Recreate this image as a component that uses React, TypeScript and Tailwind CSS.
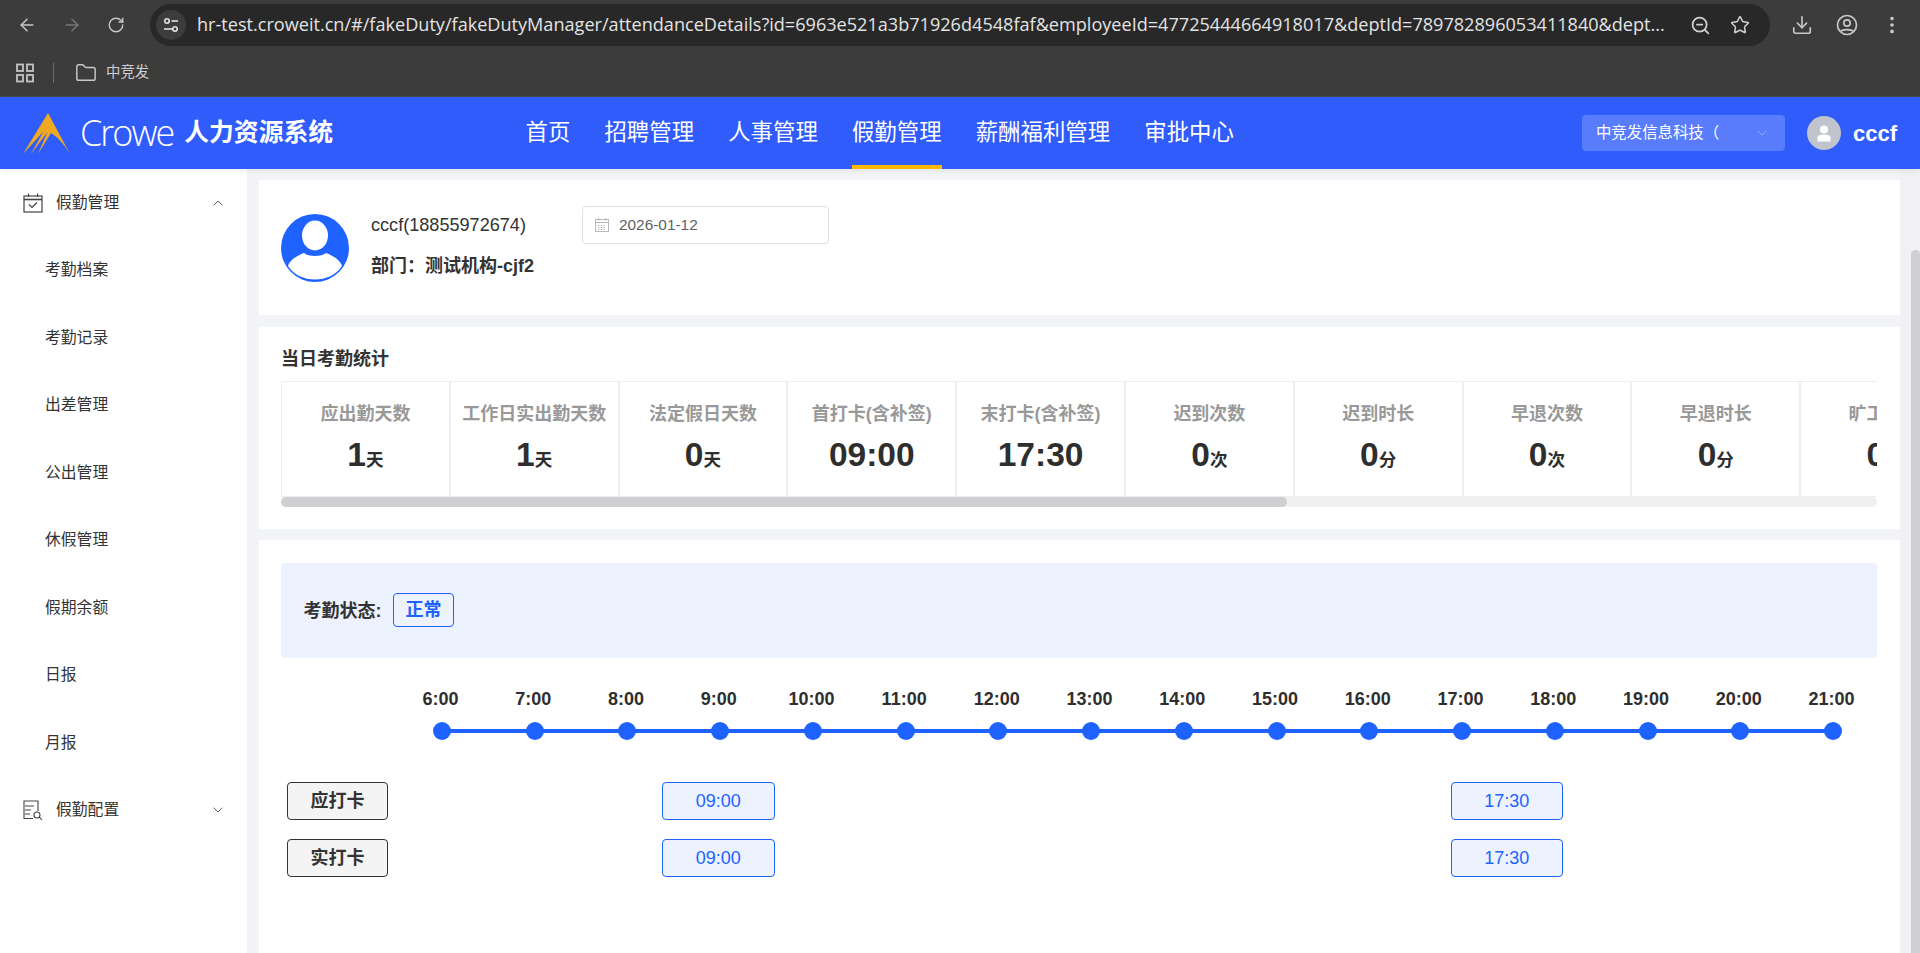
import React from "react";
import { ArrowLeft, ArrowRight, RotateCw, ZoomOut, Star, Download, EllipsisVertical, Folder, ChevronUp, ChevronDown } from "lucide-react";

const FONT = "[font-family:'Liberation_Sans','Noto_Sans_CJK_SC',sans-serif]";

const navItems = ["首页", "招聘管理", "人事管理", "假勤管理", "薪酬福利管理", "审批中心"];
const subItems = ["考勤档案", "考勤记录", "出差管理", "公出管理", "休假管理", "假期余额", "日报", "月报"];
const stats = [
  { label: "应出勤天数", value: "1", unit: "天" },
  { label: "工作日实出勤天数", value: "1", unit: "天" },
  { label: "法定假日天数", value: "0", unit: "天" },
  { label: "首打卡(含补签)", value: "09:00", unit: "" },
  { label: "末打卡(含补签)", value: "17:30", unit: "" },
  { label: "迟到次数", value: "0", unit: "次" },
  { label: "迟到时长", value: "0", unit: "分" },
  { label: "早退次数", value: "0", unit: "次" },
  { label: "早退时长", value: "0", unit: "分" },
  { label: "旷工次数", value: "0", unit: "次" },
];
const hours = Array.from({ length: 16 }, (_, i) => `${i + 6}:00`);

function SiteIcon() {
  return (
    <svg width="18" height="18" viewBox="0 0 18 18" fill="none" stroke="#e3e3e3" strokeWidth="1.6">
      <circle cx="5" cy="5" r="2.2" />
      <path d="M9.5 5H16" />
      <circle cx="13" cy="13" r="2.2" />
      <path d="M2 13h8.5" />
    </svg>
  );
}

function AppsIcon() {
  return (
    <svg width="18" height="20" viewBox="0 0 18 20" fill="none" stroke="#c4c4c4" strokeWidth="1.8">
      <rect x="1" y="1.5" width="6" height="6.5" />
      <rect x="11" y="1.5" width="6" height="6.5" />
      <rect x="1" y="12" width="6" height="6.5" />
      <rect x="11" y="12" width="6" height="6.5" />
    </svg>
  );
}

function Logo() {
  return (
    <svg width="47" height="41" viewBox="0 0 47 41" className="shrink-0">
      <path d="M25 0L47 41Q38 26 28 20L15 41L24.5 19L8 41L20.5 18.5L0 41Z" fill="#f0a922" />
    </svg>
  );
}

function PersonAvatar() {
  return (
    <svg width="68" height="68" viewBox="0 0 68 68" className="shrink-0">
      <circle cx="34" cy="34" r="34" fill="#1e62ff" />
      <ellipse cx="34" cy="21.5" rx="13" ry="15" fill="#fff" />
      <path d="M7 52C9 45 18 41 23 39C27 43 41 43 45 39C50 41 59 45 61 52C55 61 45 65.5 34 65.5C23 65.5 13 61 7 52Z" fill="#fff" />
    </svg>
  );
}

function CalendarCheckIcon() {
  return (
    <svg width="20" height="20" viewBox="0 0 20 20" fill="none" stroke="#444" strokeWidth="1.2" className="shrink-0">
      <rect x="1" y="3" width="18" height="16" />
      <path d="M1 6.5h18" strokeWidth="1.6" />
      <path d="M5.5 0.5V4M14.5 0.5V4" />
      <path d="M6 11.5l3 3 5-5" />
    </svg>
  );
}

function FileSearchIcon() {
  return (
    <svg width="20" height="20" viewBox="0 0 20 20" fill="none" stroke="#444" strokeWidth="1.1" className="shrink-0">
      <path d="M10 18.5H1V1h14v10" />
      <path d="M2 6h9M2 10h6M2 14h5" />
      <circle cx="14" cy="15" r="3" />
      <path d="M16.2 17.2L19 19.8" />
    </svg>
  );
}

function DateIcon() {
  return (
    <svg width="14" height="14" viewBox="0 0 14 14" fill="none" stroke="#b5b8be" strokeWidth="1" className="shrink-0">
      <rect x="0.5" y="1.5" width="13" height="12" />
      <path d="M0.5 4.5h13M3.5 0v2.5M10.5 0v2.5" />
      <path d="M3 7.5h8M3 9.5h8M3 11.5h8" strokeDasharray="1.5 1.2" />
    </svg>
  );
}

function UserGlyph() {
  return (
    <svg width="14" height="17" viewBox="0 0 14 17" fill="#fff">
      <circle cx="7" cy="4.5" r="4" />
      <path d="M0.5 16.5V13C0.5 10.5 3 9.5 7 9.5S13.5 10.5 13.5 13V16.5Z" />
    </svg>
  );
}

function ProfileIcon() {
  return (
    <svg width="22" height="22" viewBox="0 0 22 22" fill="none" stroke="#c7c7c7" strokeWidth="1.7">
      <circle cx="11" cy="11" r="9.5" />
      <circle cx="11" cy="9" r="3.2" />
      <path d="M4.8 17.5C6.5 15 15.5 15 17.2 17.5" />
    </svg>
  );
}

function BrowserChrome() {
  return (
    <div className="shrink-0 h-[97px] bg-[#3c3c3c] border-b border-[#4b4b4d]">
      <div className="h-[50px] flex items-center">
        <div className="w-[150px] flex items-center pl-[17px] gap-[25px] shrink-0">
          <ArrowLeft size={20} strokeWidth={1.8} color="#c7c7c7" />
          <ArrowRight size={20} strokeWidth={1.8} color="#767676" />
          <RotateCw size={18} strokeWidth={1.8} color="#c7c7c7" />
        </div>
        <div className="w-[1620px] h-[42px] rounded-full bg-[#282828] flex items-center pl-[6px] pr-[20px] shrink-0">
          <div className="w-[30px] h-[30px] rounded-full bg-[#3c3c3c] flex items-center justify-center shrink-0">
            <SiteIcon />
          </div>
          <div className="ml-[11px] w-[1478px] shrink-0 whitespace-nowrap overflow-hidden text-[18.1px] text-[#e3e3e3] [font-family:'Open_Sans',sans-serif]">
            hr-test.croweit.cn/#/fakeDuty/fakeDutyManager/attendanceDetails?id=6963e521a3b71926d4548faf&employeeId=47725444664918017&deptId=789782896053411840&dept...
          </div>
          <ZoomOut size={21} strokeWidth={2} color="#d0d0d0" className="ml-[15px] shrink-0" />
          <Star size={20} strokeWidth={1.8} color="#d0d0d0" className="ml-[19px] shrink-0" />
        </div>
        <Download size={22} strokeWidth={1.8} color="#c7c7c7" className="ml-[21px] shrink-0" />
        <div className="ml-[23px] shrink-0"><ProfileIcon /></div>
        <EllipsisVertical size={22} strokeWidth={2} color="#c7c7c7" className="ml-[23px] shrink-0" />
      </div>
      <div className="h-[46px] flex items-center pl-[16px] text-[14.4px] text-[#cfcfcf]">
        <AppsIcon />
        <div className="ml-[19px] w-px h-[20px] bg-[#6a6a6a]" />
        <Folder size={22} strokeWidth={1.6} color="#c7c7c7" className="ml-[21px]" />
        <span className={`ml-[9px] ${FONT}`}>中竞发</span>
      </div>
    </div>
  );
}

function Header() {
  return (
    <header className="relative z-10 shrink-0 h-[72px] bg-[#2f5cfa] flex items-center text-white shadow-[0_2px_6px_rgba(0,0,0,0.07)]">
      <div className="w-[525.5px] shrink-0 flex items-center pl-[23px]">
        <Logo />
        <span className="ml-[10px] text-[36px] leading-none font-light tracking-[-2px] [font-family:'Open_Sans',sans-serif]">Crowe</span>
        <span className="ml-[11px] text-[24.8px] font-bold whitespace-nowrap">人力资源系统</span>
      </div>
      <nav className="flex gap-[34.2px] h-full">
        {navItems.map((n) => (
          <div key={n} className="relative h-full flex items-center text-[22.4px] whitespace-nowrap">
            {n}
            {n === "假勤管理" && <div className="absolute left-0 right-0 bottom-0 h-[4px] bg-[#ffb800]" />}
          </div>
        ))}
      </nav>
      <div className="ml-auto flex items-center">
        <div className="w-[203px] h-[36px] rounded-[4px] bg-[#587cfb] flex items-center pl-[14px] pr-[15px] text-[15.4px]">
          <span className="whitespace-nowrap">中竞发信息科技（</span>
          <span className="ml-[1px] mt-[3px] text-[#7d88b4] text-[14px] leading-none">...</span>
          <ChevronDown size={16} strokeWidth={1.2} color="#a9b8ee" className="ml-auto" />
        </div>
        <div className="ml-[22px] w-[34px] h-[34px] rounded-full bg-[#c0c4cc] flex items-center justify-center">
          <UserGlyph />
        </div>
        <span className="ml-[12px] mr-[23px] text-[22px] font-bold">cccf</span>
      </div>
    </header>
  );
}

function Sidebar() {
  return (
    <aside className="w-[247px] shrink-0 bg-white text-[15.8px] text-[#333]">
      <div className="h-[67.5px] flex items-center pl-[23px] pr-[21px]">
        <CalendarCheckIcon />
        <span className="ml-[13px]">假勤管理</span>
        <ChevronUp size={16} strokeWidth={1.2} className="ml-auto" />
      </div>
      {subItems.map((s) => (
        <div key={s} className="h-[67.5px] flex items-center pl-[45px]">{s}</div>
      ))}
      <div className="h-[67.5px] flex items-center pl-[23px] pr-[21px]">
        <FileSearchIcon />
        <span className="ml-[13px]">假勤配置</span>
        <ChevronDown size={16} strokeWidth={1.2} className="ml-auto" />
      </div>
    </aside>
  );
}

function ProfileCard() {
  return (
    <section className="h-[135px] bg-white flex items-start pl-[22px]">
      <div className="mt-[34px]"><PersonAvatar /></div>
      <div className="ml-[22px] w-[211px] shrink-0 mt-[33px] text-[18px] text-[#333]">
        <div className="leading-[24px] text-[18.1px]">cccf(18855972674)</div>
        <div className="leading-[24px] mt-[17px] font-bold whitespace-nowrap">部门：测试机构-cjf2</div>
      </div>
      <div className="mt-[26px] w-[247px] h-[38px] rounded-[4px] border border-[#dcdfe6] flex items-center pl-[12px] text-[15.4px] text-[#606266]">
        <DateIcon />
        <span className="ml-[10px]">2026-01-12</span>
      </div>
    </section>
  );
}

function StatsCard() {
  return (
    <section className="mt-[12px] h-[202px] bg-white pt-[20px] pl-[22px]">
      <h2 className="leading-[24px] text-[18px] font-bold text-[#333]">当日考勤统计</h2>
      <div className="mt-[10px] w-[1596px]">
        <div className="flex overflow-hidden border-l border-[#eceef2]">
          {stats.map((s) => (
            <div key={s.label} className="w-[168.8px] h-[116px] shrink-0 border-t border-b border-r-2 border-[#eceef2] pt-[20px] flex flex-col items-center">
              <div className="leading-[24px] text-[18px] font-bold text-[#999] whitespace-nowrap">{s.label}</div>
              <div className="mt-[9px] h-[40px] leading-[40px] font-bold text-[#2e2e2e] whitespace-nowrap">
                <span className="text-[33.5px]">{s.value}</span>
                {s.unit && <span className="text-[17.6px]">{s.unit}</span>}
              </div>
            </div>
          ))}
        </div>
        <div className="h-[10px] rounded-full bg-[#f0f0f0]">
          <div className="w-[1006px] h-full rounded-full bg-[#cfcfd1]" />
        </div>
      </div>
    </section>
  );
}

function PunchRow({ label, className }: { label: string; className?: string }) {
  return (
    <div className={`flex h-[38px] ${className ?? ""}`}>
      <div className="w-[101px] shrink-0 rounded-[4px] border border-[#333] bg-[#f4f4f4] flex items-center justify-center text-[18px] font-bold text-[#333]">{label}</div>
      <div className="ml-[274px] w-[112.5px] shrink-0 rounded-[4px] border border-[#1e62ff] bg-[#ecf2fe] flex items-center justify-center text-[18px] text-[#1e62ff]">09:00</div>
      <div className="ml-[676.5px] w-[111.5px] shrink-0 rounded-[4px] border border-[#1e62ff] bg-[#ecf2fe] flex items-center justify-center text-[18px] text-[#1e62ff]">17:30</div>
    </div>
  );
}

function AttendanceCard() {
  return (
    <section className="mt-[11px] flex-1 bg-white pt-[23px] pl-[22px]">
      <div className="w-[1596px] h-[95px] rounded-[4px] bg-[#ecf2fe] pt-[30px] pl-[22.5px] flex items-start">
        <div className="h-[34px] leading-[36px] text-[18px] font-bold text-[#333]">考勤状态:</div>
        <div className="ml-[11.5px] w-[61px] h-[34px] rounded-[4px] border border-[#1e62ff] flex items-center justify-center text-[18px] font-bold text-[#1e62ff]">正常</div>
      </div>
      <div className="ml-[114.6px] w-[1483.7px]">
        <div className="mt-[29px] flex">
          {hours.map((h) => (
            <div key={h} className="flex-1 text-center pr-[3px] leading-[24px] text-[18px] font-bold text-[#2e2e2e]">{h}</div>
          ))}
        </div>
        <div className="relative mt-[11px] h-[18px] flex">
          <div className="absolute left-[46px] right-[46px] top-[7px] h-[4px] bg-[#1e62ff]" />
          {hours.map((h) => (
            <div key={h} className="relative flex-1 flex justify-center">
              <div className="w-[18px] h-[18px] rounded-full bg-[#1e62ff]" />
            </div>
          ))}
        </div>
      </div>
      <div className="ml-[6px]">
        <PunchRow label="应打卡" className="mt-[42px]" />
        <PunchRow label="实打卡" className="mt-[19px]" />
      </div>
    </section>
  );
}

export default function App() {
  return (
    <div className={`h-[953px] w-[1920px] overflow-hidden flex flex-col bg-[#f3f4f8] ${FONT}`}>
      <BrowserChrome />
      <Header />
      <div className="flex flex-1 min-h-0">
        <Sidebar />
        <main className="w-[1641px] shrink-0 ml-[12px] pt-[11px] flex flex-col">
          <ProfileCard />
          <StatsCard />
          <AttendanceCard />
        </main>
        <div className="w-[20px] shrink-0 bg-[#f1f1f3] pl-[11px] pt-[81px]">
          <div className="w-[9px] h-full rounded-t-[5px] bg-[#cfcfd1]" />
        </div>
      </div>
    </div>
  );
}
